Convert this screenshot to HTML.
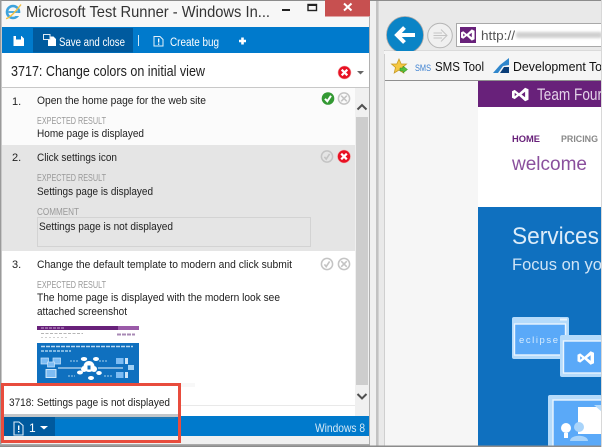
<!DOCTYPE html>
<html><head><meta charset="utf-8"><style>
html,body{margin:0;padding:0;width:602px;height:447px;overflow:hidden;background:#f0f0f0}
svg{display:block;fill:#222}
text{font-family:"Liberation Sans",sans-serif}
.s{font-size:11px}
.e{font-size:10px;fill:#999}
.w{fill:#fff}
</style></head><body>
<svg width="602" height="447" viewBox="0 0 602 447" xmlns="http://www.w3.org/2000/svg">
<defs>
<g id="xr"><circle r="6.500" fill="#e81123" stroke="#f3b0b0" stroke-width=".6"/><path d="M-2.800-2.800L2.800 2.800M2.800-2.800L-2.800 2.800" stroke="#fff" stroke-width="2.200" fill="none"/></g>
<g id="xg"><circle r="5.600" fill="none" stroke="#c4c4c4" stroke-width="1.500"/><path d="M-2.800-2.800L2.800 2.800M2.800-2.800L-2.800 2.800" stroke="#c4c4c4" stroke-width="1.600" fill="none"/></g>
<g id="cg"><circle r="5.600" fill="none" stroke="#c4c4c4" stroke-width="1.500"/><path d="M-2.600 .4L-.8 2.600L2.600-2.600" stroke="#c4c4c4" stroke-width="1.600" fill="none"/></g>
<g id="vs"><path d="M-8.500-3.200L-5.800-4.600L-1.500-1.200L4.600-6.800L8-5.200V5.200L4.600 6.800L-1.500 1.200L-5.800 4.600L-8.500 3.200V-3.200ZM-5.800-1.800V1.800L-3.600 0ZM1 0L4.600 2.700V-2.700Z" fill="#fff" fill-rule="evenodd"/></g>
<filter id="b" x="-10%" y="-60%" width="120%" height="220%"><feGaussianBlur stdDeviation="1.300"/></filter>
</defs>

<!-- left window -->
<rect width="602" height="447" fill="#f0f0f0"/>
<rect x="0" y="0" width="376" height="447" fill="#f7f7f7"/>
<rect x="0" y="0" width="602" height="1" fill="#8c8c8c"/>
<rect x="0" y="0" width="1.500" height="447" fill="#9a9a9a"/>
<!-- IE logo -->
<g transform="translate(13,12)">
<circle r="6" fill="none" stroke="#3da3dd" stroke-width="2.600"/>
<rect x="-4.500" y="-.9" width="9" height="1.800" fill="#3da3dd"/>
<rect x="1" y="1" width="7" height="3" fill="#f7f7f7"/>
<path d="M-7 6.500C-4 7 4-2 8-7.500" stroke="#f0c040" stroke-width="1.400" fill="none"/>
</g>
<text x="26" y="17" font-size="16" textLength="244" lengthAdjust="spacingAndGlyphs" fill="#333">Microsoft Test Runner - Windows In...</text>
<rect x="282" y="9" width="8" height="2" fill="#222"/>
<rect x="308" y="4.500" width="8.500" height="6" fill="none" stroke="#222" stroke-width="1.400"/>
<rect x="308" y="4" width="9" height="2" fill="#222"/>
<rect x="325" y="0" width="45" height="16.500" fill="#c75050"/>
<path d="M344 3.500L351.500 10.500M351.500 3.500L344 10.500" stroke="#fff" stroke-width="2" fill="none"/>

<!-- toolbar -->
<rect x="2" y="27" width="367" height="26" fill="#007acc"/>
<rect x="33" y="28" width="100" height="24.500" fill="#005a9e"/>
<path d="M13.500 36h8l2.500 2.500v7.500h-10.500z M16 36v3.500h5v-3.500z" fill="#fff" fill-rule="evenodd"/>
<path d="M50 36.500h3.500l2.500 2.500v7h-8v-7.500h2z" fill="#fff"/>
<rect x="43.500" y="34.500" width="6.500" height="5" fill="#005a9e" stroke="#dfeaf3" stroke-width="1"/>
<text x="59" y="46" font-size="11.500" class="w" textLength="66" lengthAdjust="spacingAndGlyphs">Save and close</text>
<rect x="138" y="35" width="1" height="11" fill="#cfe6f6"/>
<path d="M154 36.500h6l3 3v6.500h-9z" fill="none" stroke="#e4f1fa" stroke-width="1"/>
<rect x="158" y="38.500" width="1.300" height="4" fill="#fff"/><rect x="158" y="43.500" width="1.300" height="1.300" fill="#fff"/>
<text x="170" y="46" font-size="11.500" class="w" textLength="49" lengthAdjust="spacingAndGlyphs">Create bug</text>
<path d="M242.500 37.500v7M239 41h7" stroke="#fff" stroke-width="2.600" fill="none"/>

<!-- heading -->
<rect x="2" y="53" width="367" height="34" fill="#fff"/>
<text x="11" y="76" font-size="14.500" textLength="194" lengthAdjust="spacingAndGlyphs" fill="#222">3717: Change colors on initial view</text>
<use href="#xr" x="344.500" y="72.500"/>
<path d="M357 71h7l-3.500 3.500z" fill="#666"/>
<rect x="2" y="87" width="367" height="1" fill="#c8c8c8"/>

<!-- rows -->
<rect x="2" y="88" width="353" height="57" fill="#fbfbfb"/>
<rect x="2" y="145" width="353" height="106" fill="#e5e5e5"/>
<rect x="2" y="251" width="353" height="165" fill="#fff"/>
<rect x="355" y="88" width="14" height="328" fill="#f0f0f0"/>
<rect x="356" y="117" width="12" height="268" fill="#cdcdcd"/>
<path d="M357.500 109.500L362 105L366.500 109.500" fill="none" stroke="#505050" stroke-width="2"/>
<path d="M357.500 394L362 398.500L366.500 394" fill="none" stroke="#505050" stroke-width="2"/>

<text x="12" y="105" class="s">1.</text>
<text x="37" y="104" class="s" textLength="169" lengthAdjust="spacingAndGlyphs">Open the home page for the web site</text>
<text x="37" y="124" class="e" textLength="69" lengthAdjust="spacingAndGlyphs">EXPECTED RESULT</text>
<text x="37" y="137" class="s" textLength="107" lengthAdjust="spacingAndGlyphs">Home page is displayed</text>
<circle cx="328" cy="98.500" r="6.300" fill="#339933"/>
<path d="M325 98.800L327.300 101.300L331 95.800" fill="none" stroke="#fff" stroke-width="2"/>
<use href="#xg" x="344" y="98.500"/>

<text x="12" y="161" class="s">2.</text>
<text x="37" y="161" class="s" textLength="80" lengthAdjust="spacingAndGlyphs">Click settings icon</text>
<text x="37" y="181" class="e" textLength="69" lengthAdjust="spacingAndGlyphs">EXPECTED RESULT</text>
<text x="37" y="195" class="s" textLength="116" lengthAdjust="spacingAndGlyphs">Settings page is displayed</text>
<text x="37" y="215" class="e" textLength="42" lengthAdjust="spacingAndGlyphs">COMMENT</text>
<rect x="37.500" y="217.500" width="273" height="29" fill="#e5e5e5" stroke="#d3d3d3"/>
<text x="39" y="230" class="s" textLength="134" lengthAdjust="spacingAndGlyphs">Settings page is not displayed</text>
<use href="#cg" x="327" y="156.500"/>
<use href="#xr" x="344" y="156.500"/>

<text x="12" y="268" class="s">3.</text>
<text x="37" y="268" class="s" textLength="255" lengthAdjust="spacingAndGlyphs">Change the default template to modern and click submit</text>
<text x="37" y="288" class="e" textLength="69" lengthAdjust="spacingAndGlyphs">EXPECTED RESULT</text>
<text x="37" y="301" class="s" textLength="243" lengthAdjust="spacingAndGlyphs">The home page is displayed with the modern look see</text>
<text x="37" y="315" class="s" textLength="90" lengthAdjust="spacingAndGlyphs">attached screenshot</text>
<use href="#cg" x="327" y="264"/>
<use href="#xg" x="344" y="264"/>

<!-- thumbnail -->
<rect x="37" y="326" width="102" height="60" fill="#fff"/>
<rect x="37" y="326" width="102" height="4" fill="#68217a"/>
<rect x="118" y="326" width="21" height="4" fill="#9a5aa8"/>
<path d="M41 328H65" stroke="#c9a9d3" stroke-width="1" stroke-dasharray="3 1"/>
<path d="M41 333.500H83" stroke="#b5b5b5" stroke-width="1" stroke-dasharray="3 1.500"/>
<path d="M41 337.500H69" stroke="#cfcfcf" stroke-width="1" stroke-dasharray="2 2"/>
<path d="M117 334.500H135" stroke="#a88ab5" stroke-width="2" stroke-dasharray="4 1"/>
<rect x="37" y="343" width="102" height="43" fill="#0f70bf"/>
<path d="M41 346.500H133" stroke="#b8d8f2" stroke-width="1.500" stroke-dasharray="4 1"/>
<path d="M41 351H71" stroke="#a6cfee" stroke-width="1.500" stroke-dasharray="3 1"/>
<rect x="41" y="358" width="7.500" height="6" fill="#7dbcf3" stroke="#cfe6f9" stroke-width=".7"/>
<rect x="53" y="358" width="7.500" height="6" fill="#7dbcf3" stroke="#cfe6f9" stroke-width=".7"/>
<rect x="47.500" y="362" width="7" height="5" fill="#7dbcf3" stroke="#cfe6f9" stroke-width=".7"/>
<rect x="46" y="369.500" width="10" height="8" fill="#7dbcf3" stroke="#dff0fb" stroke-width=".9"/>
<path d="M58 368H81M98 368H123" stroke="#eef6fc" stroke-width="1"/>
<circle cx="89" cy="366.500" r="5.500" fill="#fff"/><circle cx="84" cy="369" r="3" fill="#fff"/><circle cx="94" cy="369" r="3" fill="#fff"/>
<rect x="87.500" y="365.500" width="3" height="4" fill="#0f70bf"/>
<g fill="#fff"><ellipse cx="84" cy="359" rx="3.200" ry="2"/><ellipse cx="96" cy="359" rx="3" ry="2"/><ellipse cx="80" cy="372.500" rx="3" ry="2"/><ellipse cx="99" cy="373" rx="2.800" ry="2"/><ellipse cx="91" cy="378" rx="3" ry="2"/></g>
<path d="M70 361H79M99 361H107M68 376H75M104 376H112" stroke="#a6cfee" stroke-width="1" stroke-dasharray="2 1"/>
<rect x="116" y="358" width="7.500" height="6" fill="#7dbcf3"/><rect x="125" y="358" width="3" height="6" fill="#cde4f7"/>
<rect x="128" y="365" width="6" height="5" fill="#9fd0f5"/>
<rect x="116" y="372" width="7.500" height="6" fill="#7dbcf3"/><rect x="125" y="372" width="3" height="6" fill="#cde4f7"/>

<!-- popup -->
<rect x="139" y="383" width="56" height="4" fill="#f8f8f8"/>
<rect x="180" y="405" width="175" height="1" fill="#e9e9e9"/>
<rect x="3" y="385" width="176" height="29" fill="#fff"/>
<text x="9" y="406" class="s" textLength="161" lengthAdjust="spacingAndGlyphs">3718: Settings page is not displayed</text>

<!-- status bar -->
<rect x="2" y="416" width="367" height="20" fill="#007acc"/>
<rect x="3" y="414" width="175" height="3" fill="#c3c6c9"/>
<rect x="4" y="417" width="51" height="19.500" fill="#005a9e"/>
<rect x="55" y="417" width="120" height="2" fill="#1e78b4"/>
<path d="M14 422h5l4 3.500v9.500h-9z" fill="none" stroke="#d9e9f5" stroke-width="1.100"/>
<rect x="18" y="425.500" width="1.400" height="4.500" fill="#fff"/><rect x="18" y="431" width="1.400" height="1.400" fill="#fff"/>
<text x="29" y="432" font-size="12" class="w">1</text>
<path d="M40 426h8l-4 3.500z" fill="#fff"/>
<text x="315" y="432" font-size="12" fill="#d4e9f7" textLength="50" lengthAdjust="spacingAndGlyphs">Windows 8</text>

<!-- window bottom -->
<rect x="2" y="436" width="368" height="8" fill="#f0f0f0"/>
<rect x="0" y="444" width="372" height="1.500" fill="#aaa"/>
<rect x="369" y="16" width="1" height="428" fill="#b0b0b0"/>

<!-- separator -->
<rect x="370" y="1" width="6" height="445" fill="#f0f0f0"/>
<rect x="376" y="1" width="2" height="445" fill="#c2c2c2"/>

<!-- red annotation -->
<rect x="2.500" y="384.500" width="177" height="57" fill="none" stroke="#e84c3d" stroke-width="3"/>

<!-- IE chrome -->
<rect x="378" y="1" width="224" height="50" fill="#e9e9e9"/>
<rect x="378" y="1" width="7" height="445" fill="#e9e9e9"/>
<rect x="378" y="1" width="1" height="445" fill="#d2d2d2"/>
<rect x="385" y="51" width="217" height="29" fill="#f5f5f5"/>
<rect x="385" y="50" width="217" height="1" fill="#dadada"/>
<rect x="385" y="80" width="217" height="1" fill="#8f8f8f"/>
<rect x="384" y="50" width="1" height="397" fill="#cfcfcf"/>

<!-- back -->
<circle cx="405" cy="35" r="18.500" fill="#0a84c6" stroke="#a8a8a8" stroke-width=".8"/>
<rect x="384" y="51" width="40" height="3" fill="#f5f5f5"/>
<path d="M415 35H397M404.500 27.500L397 35L404.500 42.500" fill="none" stroke="#fff" stroke-width="4"/>
<circle cx="440" cy="35.500" r="12.300" fill="#f0f0f0" stroke="#b5b5b5" stroke-width="1"/>
<path d="M447 35.500H433.500M441 29.500L447 35.500L441 41.500M433.500 33H442M433.500 38H442" fill="none" stroke="#c4c4c4" stroke-width="1"/>

<!-- address bar -->
<rect x="456.500" y="23.500" width="160" height="23" fill="#fff" stroke="#a9a9a9"/>
<rect x="460" y="27" width="16" height="16" fill="#68217a"/>
<use href="#vs" transform="translate(468,35) scale(.82)"/>
<text x="481" y="40" font-size="13" textLength="34" lengthAdjust="spacingAndGlyphs" fill="#555">http://</text>
<rect x="516" y="32" width="86" height="6" rx="2" fill="#c4c4c4" filter="url(#b)" opacity=".8"/>

<!-- favourites -->
<path d="M399 59l2.200 5h5.300l-4 3.500 1.300 5.500-4.800-3-4.800 3 1.300-5.500-4-3.500h5.300z" fill="#f5c842" stroke="#c89b26" stroke-width=".8"/>
<path d="M400 68h3v-2l4.500 3.500-4.500 3.500v-2h-3z" fill="#55c03c" stroke="#2f8a1e" stroke-width=".5"/>
<text x="415" y="71" font-size="9" textLength="16" lengthAdjust="spacingAndGlyphs" fill="#3a7fd0">SMS</text>
<text x="435" y="71" font-size="12.500" textLength="49" lengthAdjust="spacingAndGlyphs" fill="#111">SMS Tool</text>
<path d="M500 65L509 58V65L503 66L498 73H493Z" fill="#2f86cc"/><path d="M504 67H509V73H500Z" fill="#0a3d78"/>
<text x="513" y="71" font-size="12.500" textLength="89" lengthAdjust="spacingAndGlyphs" fill="#111">Development To</text>

<!-- page -->
<rect x="385" y="81" width="93" height="366" fill="#f6f6f6"/>
<rect x="478" y="81" width="124" height="26" fill="#68217a"/>
<rect x="478" y="107" width="124" height="100" fill="#fff"/>
<use href="#vs" transform="translate(520.500,94.500) scale(1)"/>
<text x="537" y="100" font-size="17" textLength="65" lengthAdjust="spacingAndGlyphs" fill="#e3d3e8">Team Four</text>
<text x="512" y="142" font-size="9.500" font-weight="700" textLength="28" lengthAdjust="spacingAndGlyphs" fill="#68217a">HOME</text>
<text x="561" y="142" font-size="9.500" font-weight="700" textLength="37" lengthAdjust="spacingAndGlyphs" fill="#888">PRICING</text>
<text x="512" y="170" font-size="19" textLength="75" lengthAdjust="spacingAndGlyphs" fill="#8a4f9d">welcome</text>
<rect x="478" y="207" width="124" height="240" fill="#0f70bf"/>
<text x="512" y="244" font-size="24" textLength="87" lengthAdjust="spacingAndGlyphs" fill="#dcecf9">Services</text>
<text x="512" y="270" font-size="17" textLength="90" lengthAdjust="spacingAndGlyphs" fill="#cfe4f6">Focus on yo</text>

<!-- eclipse tile -->
<rect x="512" y="317" width="57" height="42" rx="2" fill="#b5dbfb"/>
<rect x="514.500" y="324" width="51" height="31" fill="#5aa9f8" stroke="#eaf5fe" stroke-width="1.400"/>
<rect x="560" y="318.500" width="7" height="2" fill="#eaf5fe"/>
<text x="519" y="343" font-size="9.500" textLength="39" fill="#d8ecfd">eclipse</text>
<!-- vs tile -->
<rect x="560" y="335" width="42" height="42" rx="2" fill="#b5dbfb"/>
<rect x="563.500" y="341" width="39" height="32" fill="#5aa9f8" stroke="#eaf5fe" stroke-width="1.400"/>
<use href="#vs" transform="translate(586,358) scale(1)"/>
<!-- third tile -->
<rect x="548" y="395" width="54" height="52" rx="2" fill="#b5dbfb"/>
<rect x="553" y="400" width="49" height="47" fill="#5aa9f8" stroke="#eaf5fe" stroke-width="1.400"/>
<path d="M578 407h20l4 4v23h-24z" fill="#fff"/>
<path d="M594 405l8 7v-7z" fill="#b5dbfb"/>
<circle cx="566" cy="428" r="5" fill="#fff"/><rect x="564" y="433" width="4" height="5" fill="#fff"/>
<circle cx="579" cy="427" r="5" fill="#a9d4fa"/><path d="M570 441c0-7 18-7 18 0z" fill="#a9d4fa"/>

<rect x="0" y="445.500" width="602" height="1.500" fill="#8c8c8c"/>
<rect x="601" y="0" width="1" height="447" fill="#d8d8d8"/>
</svg>
</body></html>
